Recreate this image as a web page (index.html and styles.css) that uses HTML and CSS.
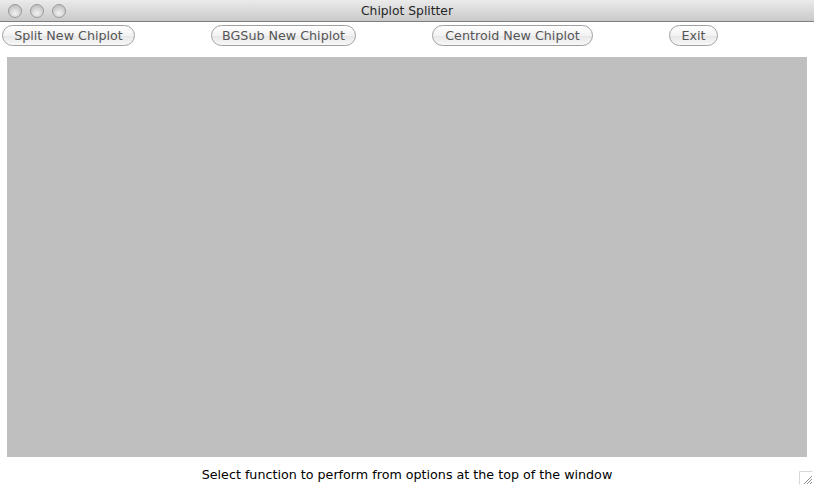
FILE: index.html
```html
<!DOCTYPE html>
<html>
<head>
<meta charset="utf-8">
<link rel="stylesheet" href="styles.css">
</head>
<body>
<div class="window">
  <div class="titlebar">
    <div class="lights">
      <span class="light"></span>
      <span class="light"></span>
      <span class="light"></span>
    </div>
    <div class="title">Chiplot Splitter</div>
  </div>
  <div class="toolbar">
    <button class="btn btn-split">Split New Chiplot</button>
    <button class="btn btn-bgsub">BGSub New Chiplot</button>
    <button class="btn btn-centroid">Centroid New Chiplot</button>
    <button class="btn btn-exit">Exit</button>
  </div>
  <div class="canvas"></div>
  <div class="status">
    <span class="status-text">Select function to perform from options at the top of the window</span>
    <svg class="grip" width="14" height="14" viewBox="0 0 14 14">
      <path d="M0.5 13.5 V0.5 H13.5" fill="none" stroke="#d8d8d8" stroke-width="1"/>
      <path d="M5 13 L13 5 M8 13 L13 8 M11 13 L13 11" stroke="#8c8c8c" stroke-width="1"/>
      <path d="M6 13 L13 6 M9 13 L13 9 M12 13 L13 12" stroke="#ffffff" stroke-width="1"/>
    </svg>
  </div>
</div>
</body>
</html>
```

FILE: styles.css
```css
html, body {
  margin: 0;
  padding: 0;
  background: #ffffff;
}
body {
  font-family: "DejaVu Sans", "Liberation Sans", sans-serif;
  width: 814px;
  height: 486px;
  overflow: hidden;
}
.window {
  width: 814px;
  height: 486px;
  display: flex;
  flex-direction: column;
  background: #ffffff;
}
.titlebar {
  position: relative;
  height: 21px;
  flex: 0 0 21px;
  background: linear-gradient(#ebebeb, #c9c9c9);
  border-bottom: 1px solid #7e7e7e;
  display: flex;
  align-items: center;
  justify-content: center;
}
.lights {
  position: absolute;
  left: 8px;
  top: 4px;
  display: flex;
  gap: 8px;
}
.light {
  width: 12px;
  height: 12px;
  border-radius: 50%;
  border: 1px solid #9a9a9a;
  background: radial-gradient(circle at 50% 70%, #f2f2f2 0%, #d6d6d6 45%, #b3b3b3 100%);
  box-sizing: content-box;
}
.title {
  font-size: 12.3px;
  color: #262626;
}
.toolbar {
  display: flex;
  gap: 76px;
  padding: 3px 0 0 2px;
  height: 21px;
  flex: 0 0 21px;
}
.btn {
  height: 21px;
  border: 1px solid #a0a0a0;
  border-radius: 11px;
  background: linear-gradient(#ffffff, #f2f2f2 50%, #e6e6e6 51%, #f8f8f8);
  font-family: "DejaVu Sans", "Liberation Sans", sans-serif;
  font-size: 12.7px;
  color: #555555;
  padding: 0;
  margin: 0;
  text-align: center;
  line-height: 18px;
}
.btn-split { width: 133px; }
.btn-bgsub { width: 145px; }
.btn-centroid { width: 161px; }
.btn-exit { width: 49px; }
.canvas {
  margin: 11px 7px 0 7px;
  width: 800px;
  height: 400px;
  flex: 0 0 400px;
  background: #bfbfbf;
}
.status {
  position: relative;
  flex: 1;
  display: flex;
  justify-content: center;
  align-items: center;
}
.status-text {
  font-size: 12.7px;
  color: #000000;
  margin-top: 6px;
}
.grip {
  position: absolute;
  right: 1px;
  bottom: 1px;
}
```
